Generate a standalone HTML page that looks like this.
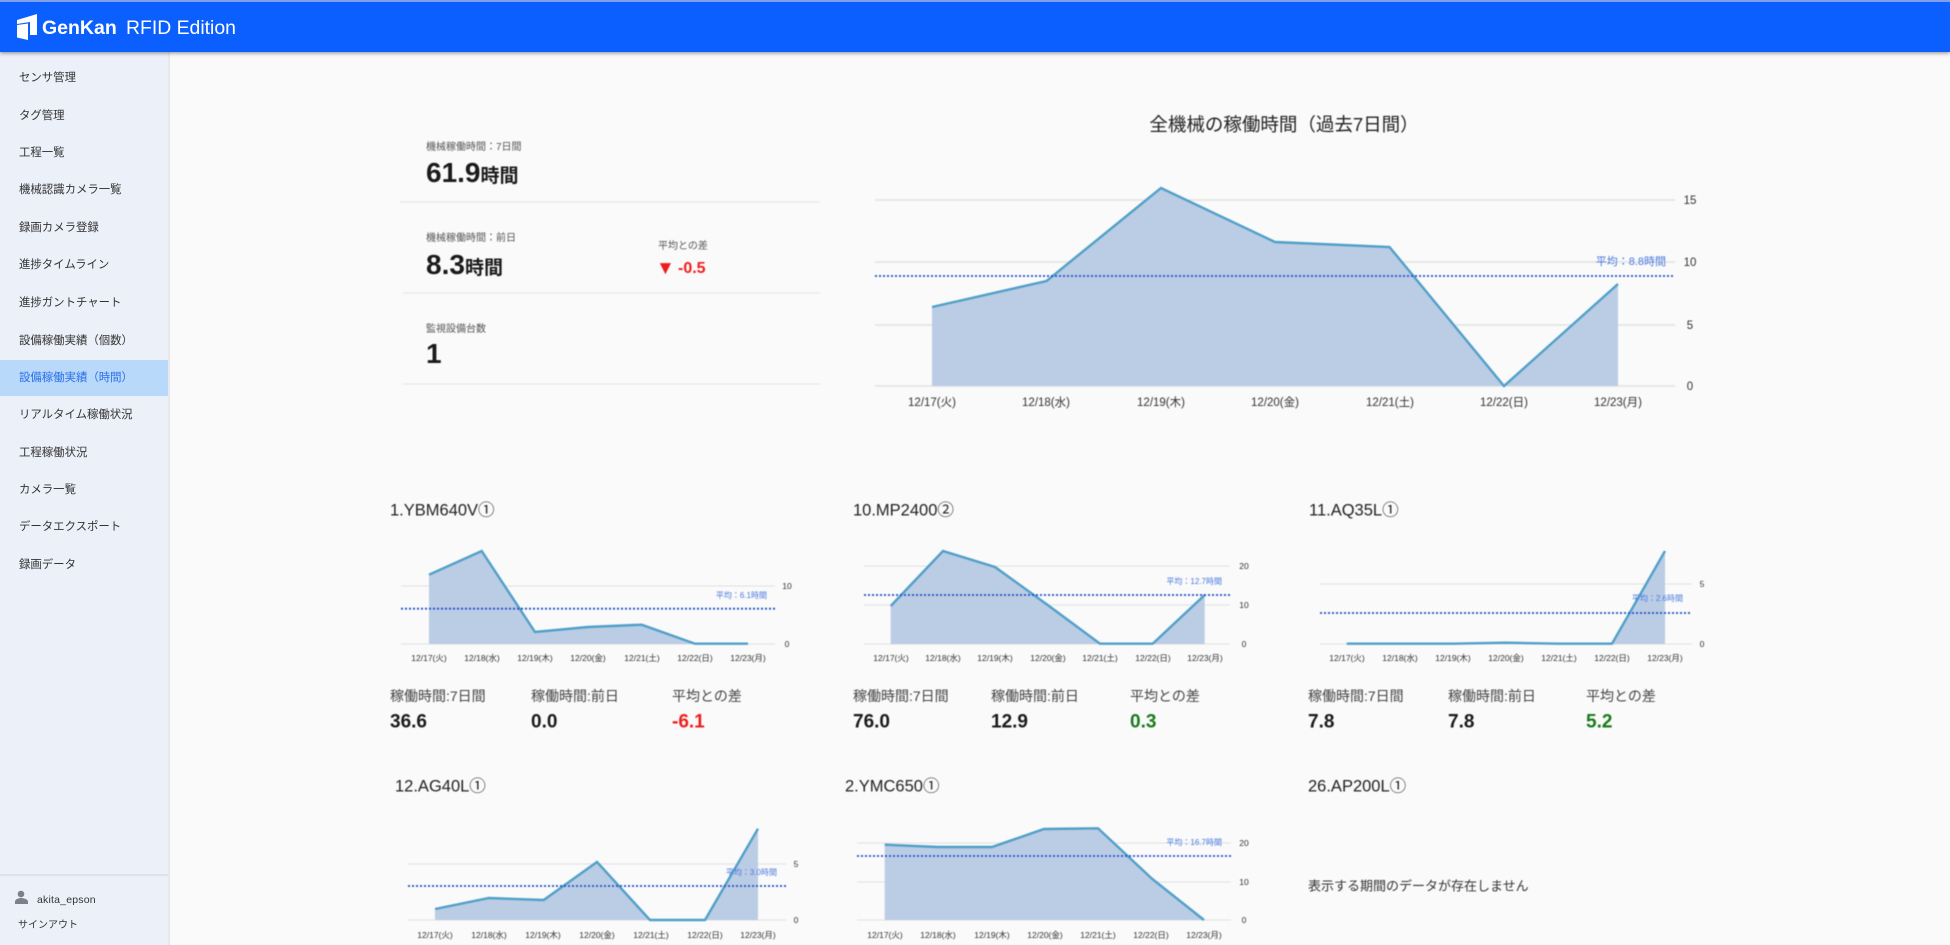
<!DOCTYPE html>
<html lang="ja">
<head>
<meta charset="utf-8">
<title>GenKan RFID Edition</title>
<style>
html,body{margin:0;padding:0;width:1950px;height:945px;overflow:hidden;background:#fafafa;font-family:"Liberation Sans","Noto Sans CJK JP",sans-serif;color:#222}
#hdr{position:absolute;left:0;top:0;width:1950px;height:52px;background:#0b5fff;border-top:2px solid #7f9fe8;box-sizing:border-box;box-shadow:0 1px 4px rgba(0,0,0,.45);z-index:3}
#side{position:absolute;left:0;top:52px;width:168px;height:893px;background:#ecf0f9;border-right:2px solid #e6e8ee}
.it{position:absolute;left:0;width:168px;height:36px;line-height:36px;padding-left:19px;box-sizing:border-box;font-size:11.4px;color:#333;white-space:nowrap}
.it span{filter:blur(.35px);display:inline-block}
.act{background:#b9d9fb;color:#2a6fe8}
svg{position:absolute;left:0;top:0}
#main{filter:blur(.4px)}
text{font-family:"Liberation Sans","Noto Sans CJK JP",sans-serif}
.gl{stroke:#e2e2e2;stroke-width:1.5;fill:none}
.ar{fill:#bbcce5;stroke:none}
.ln{fill:none;stroke:#4f9fc8;stroke-width:2.4;stroke-linejoin:miter}
.av{stroke:#1f4fc8;stroke-width:1.8;stroke-dasharray:2 2;fill:none}
.avt{fill:#4a78e0;text-anchor:end}
.x1{font-size:11.5px;fill:#333;text-anchor:middle}
.x2{font-size:8.5px;fill:#333;text-anchor:middle}
.y1{font-size:11.5px;fill:#333;text-anchor:middle}
.y2{font-size:8.5px;fill:#333;text-anchor:middle}
.t{font-size:16.5px;fill:#222}
.lb{font-size:14px;fill:#444}
.v{font-size:19px;font-weight:bold;fill:#1a1a1a}
.r{fill:#ee1c1c}.g{fill:#1a7a1a}
</style>
</head>
<body>
<div id="hdr"></div>
<div id="side">
<div class="it" style="top:8px"><span>センサ管理</span></div>
<div class="it" style="top:46px"><span>タグ管理</span></div>
<div class="it" style="top:83px"><span>工程一覧</span></div>
<div class="it" style="top:120px"><span>機械認識カメラ一覧</span></div>
<div class="it" style="top:158px"><span>録画カメラ登録</span></div>
<div class="it" style="top:195px"><span>進捗タイムライン</span></div>
<div class="it" style="top:233px"><span>進捗ガントチャート</span></div>
<div class="it" style="top:271px"><span>設備稼働実績（個数）</span></div>
<div class="it act" style="top:308px"><span>設備稼働実績（時間）</span></div>
<div class="it" style="top:345px"><span>リアルタイム稼働状況</span></div>
<div class="it" style="top:383px"><span>工程稼働状況</span></div>
<div class="it" style="top:420px"><span>カメラ一覧</span></div>
<div class="it" style="top:457px"><span>データエクスポート</span></div>
<div class="it" style="top:495px"><span>録画データ</span></div>
<div style="position:absolute;left:0;top:822px;width:168px;height:1.5px;background:#dde1ec"></div>
<div style="position:absolute;left:37px;top:840px;font-size:10.5px;line-height:16px;color:#333;letter-spacing:.2px;filter:blur(.35px)">akita_epson</div>
<div style="position:absolute;left:18px;top:866px;font-size:10px;line-height:16px;color:#333;filter:blur(.35px)">サインアウト</div>
</div>
<svg width="1950" height="945" viewBox="0 0 1950 945" style="z-index:4">
<path fill="#fff" d="M17 20 L37 14 L37 35 L30 35 L30 22 L17 24 Z"/>
<path fill="#fff" d="M17 25 L28 23.5 L28 40 L17 37.5 Z"/>
<text x="42" y="34" font-size="19.5" font-weight="bold" fill="#fff">GenKan</text>
<text x="126" y="34" font-size="19.4" fill="#fff">RFID Edition</text>
<circle cx="21" cy="894" r="3.3" fill="#7d8088"/>
<path fill="#7d8088" d="M15 904 v-2.5 c0-2.2 4-3.5 6-3.5 s7 1.300 7 3.500 v2.500 z"/>
</svg>
<svg id="main" width="1950" height="945" viewBox="0 0 1950 945">
<!-- stats -->
<text x="426" y="150" font-size="10" fill="#555">機械稼働時間：7日間</text>
<text x="426" y="182" font-size="28" font-weight="bold" fill="#1a1a1a">61.9<tspan font-size="19">時間</tspan></text>
<line x1="400" y1="202" x2="820" y2="202" stroke="#eaeaea" stroke-width="1.5"/>
<text x="426" y="241" font-size="10" fill="#555">機械稼働時間：前日</text>
<text x="426" y="274" font-size="28" font-weight="bold" fill="#1a1a1a">8.3<tspan font-size="19">時間</tspan></text>
<text x="658" y="249" font-size="10" fill="#555">平均との差</text>
<text x="656" y="274" font-size="19" font-weight="bold" fill="#ee1c1c">▼</text>
<text x="678" y="273" font-size="16" font-weight="bold" fill="#ee1c1c">-0.5</text>
<line x1="403" y1="293" x2="820" y2="293" stroke="#eaeaea" stroke-width="1.5"/>
<text x="426" y="332" font-size="10" fill="#555">監視設備台数</text>
<text x="426" y="363" font-size="28" font-weight="bold" fill="#1a1a1a">1</text>
<line x1="403" y1="384" x2="820" y2="384" stroke="#eaeaea" stroke-width="1.5"/>

<!-- main chart -->
<text x="1284" y="131" font-size="18.5" fill="#222" text-anchor="middle">全機械の稼働時間（過去7日間）</text>
<path class="gl" d="M875 200H1675M875 262H1675M875 325H1675M875 386H1675"/>
<polygon class="ar" points="932,386 932,307 1046.5,281 1161,188 1275,242 1389.5,247 1504,386 1618,284 1618,386"/>
<polyline class="ln" points="932,307 1046.5,281 1161,188 1275,242 1389.5,247 1504,386 1618,284"/>
<line class="av" x1="875" y1="276" x2="1675" y2="276"/>
<text class="avt" x="1666" y="265" font-size="11">平均：8.8時間</text>
<text class="y1" x="1690" y="204">15</text><text class="y1" x="1690" y="266">10</text><text class="y1" x="1690" y="329">5</text><text class="y1" x="1690" y="390">0</text>
<text class="x1" x="932" y="406">12/17(火)</text><text class="x1" x="1046" y="406">12/18(水)</text><text class="x1" x="1161" y="406">12/19(木)</text><text class="x1" x="1275" y="406">12/20(金)</text><text class="x1" x="1390" y="406">12/21(土)</text><text class="x1" x="1504" y="406">12/22(日)</text><text class="x1" x="1618" y="406">12/23(月)</text>

<!-- chart 1 -->
<text class="t" x="390" y="515.500">1.YBM640V①</text>
<path class="gl" style="stroke-width:1" d="M401 586H775M401 644H775"/>
<polygon class="ar" points="429,644 429,574.700 481.700,551 535,632 588,627 641.700,624.700 695,643.700 748,643.700 748,644"/>
<polyline class="ln" points="429,574.700 481.700,551 535,632 588,627 641.700,624.700 695,643.700 748,643.700"/>
<line class="av" x1="401" y1="608.700" x2="775" y2="608.700"/>
<text class="avt" x="767" y="598" font-size="8">平均：6.1時間</text>
<text class="y2" x="787" y="589">10</text><text class="y2" x="787" y="647">0</text>
<text class="x2" x="429" y="661">12/17(火)</text><text class="x2" x="482" y="661">12/18(水)</text><text class="x2" x="535" y="661">12/19(木)</text><text class="x2" x="588" y="661">12/20(金)</text><text class="x2" x="642" y="661">12/21(土)</text><text class="x2" x="695" y="661">12/22(日)</text><text class="x2" x="748" y="661">12/23(月)</text>
<text class="lb" x="390" y="701">稼働時間:7日間</text><text class="lb" x="531" y="701">稼働時間:前日</text><text class="lb" x="672" y="701">平均との差</text>
<text class="v" x="390" y="727.500">36.6</text><text class="v" x="531" y="727.500">0.0</text><text class="v r" x="672" y="727.500">-6.1</text>

<!-- chart 2 -->
<text class="t" x="853" y="515.500">10.MP2400②</text>
<path class="gl" style="stroke-width:1" d="M864 566H1230M864 605H1230M864 644H1230"/>
<polygon class="ar" points="890.700,644 890.700,606 943,551 995,567 1047.700,605 1100,643.700 1152.700,643.700 1204.700,595 1204.700,644"/>
<polyline class="ln" points="890.700,606 943,551 995,567 1047.700,605 1100,643.700 1152.700,643.700 1204.700,595"/>
<line class="av" x1="864" y1="595" x2="1230" y2="595"/>
<text class="avt" x="1222" y="584" font-size="8">平均：12.7時間</text>
<text class="y2" x="1244" y="569">20</text><text class="y2" x="1244" y="608">10</text><text class="y2" x="1244" y="647">0</text>
<text class="x2" x="891" y="661">12/17(火)</text><text class="x2" x="943" y="661">12/18(水)</text><text class="x2" x="995" y="661">12/19(木)</text><text class="x2" x="1048" y="661">12/20(金)</text><text class="x2" x="1100" y="661">12/21(土)</text><text class="x2" x="1153" y="661">12/22(日)</text><text class="x2" x="1205" y="661">12/23(月)</text>
<text class="lb" x="853" y="701">稼働時間:7日間</text><text class="lb" x="991" y="701">稼働時間:前日</text><text class="lb" x="1130" y="701">平均との差</text>
<text class="v" x="853" y="727.500">76.0</text><text class="v" x="991" y="727.500">12.9</text><text class="v g" x="1130" y="727.500">0.3</text>

<!-- chart 3 -->
<text class="t" x="1309" y="515.500">11.AQ35L①</text>
<path class="gl" style="stroke-width:1" d="M1320 584H1692M1320 644H1692"/>
<polygon class="ar" points="1612,644 1665,551 1665,644"/>
<polyline class="ln" points="1346.700,643.700 1399.700,643.700 1452.700,643.700 1505.700,642.700 1558.700,643.700 1612,643.700 1665,551"/>
<line class="av" x1="1320" y1="613" x2="1692" y2="613"/>
<text class="avt" x="1683" y="601" font-size="8">平均：2.6時間</text>
<text class="y2" x="1702" y="587">5</text><text class="y2" x="1702" y="647">0</text>
<text class="x2" x="1347" y="661">12/17(火)</text><text class="x2" x="1400" y="661">12/18(水)</text><text class="x2" x="1453" y="661">12/19(木)</text><text class="x2" x="1506" y="661">12/20(金)</text><text class="x2" x="1559" y="661">12/21(土)</text><text class="x2" x="1612" y="661">12/22(日)</text><text class="x2" x="1665" y="661">12/23(月)</text>
<text class="lb" x="1308" y="701">稼働時間:7日間</text><text class="lb" x="1448" y="701">稼働時間:前日</text><text class="lb" x="1586" y="701">平均との差</text>
<text class="v" x="1308" y="727.500">7.8</text><text class="v" x="1448" y="727.500">7.8</text><text class="v g" x="1586" y="727.500">5.2</text>

<!-- chart 4 -->
<text class="t" x="395" y="791.500">12.AG40L①</text>
<path class="gl" style="stroke-width:1" d="M408 864H786M408 920H786"/>
<polygon class="ar" points="435,920 435,909 489,898 543.700,900 597,862 650,920 705,920 758,828.700 758,920"/>
<polyline class="ln" points="435,909 489,898 543.700,900 597,862 650,920 705,920 758,828.700"/>
<line class="av" x1="408" y1="886" x2="786" y2="886"/>
<text class="avt" x="777" y="875" font-size="8">平均：3.0時間</text>
<text class="y2" x="796" y="867">5</text><text class="y2" x="796" y="923">0</text>
<text class="x2" x="435" y="938">12/17(火)</text><text class="x2" x="489" y="938">12/18(水)</text><text class="x2" x="543" y="938">12/19(木)</text><text class="x2" x="597" y="938">12/20(金)</text><text class="x2" x="651" y="938">12/21(土)</text><text class="x2" x="705" y="938">12/22(日)</text><text class="x2" x="758" y="938">12/23(月)</text>

<!-- chart 5 -->
<text class="t" x="845" y="791.500">2.YMC650①</text>
<path class="gl" style="stroke-width:1" d="M857 843H1231M857 882H1231M857 920H1231"/>
<polygon class="ar" points="884.700,920 884.700,844.700 938,847 992,847 1044,829 1098,828.300 1152,878.700 1204,920"/>
<polyline class="ln" points="884.700,844.700 938,847 992,847 1044,829 1098,828.300 1152,878.700 1204,920"/>
<line class="av" x1="857" y1="856" x2="1231" y2="856"/>
<text class="avt" x="1222" y="845" font-size="8">平均：16.7時間</text>
<text class="y2" x="1244" y="846">20</text><text class="y2" x="1244" y="885">10</text><text class="y2" x="1244" y="923">0</text>
<text class="x2" x="885" y="938">12/17(火)</text><text class="x2" x="938" y="938">12/18(水)</text><text class="x2" x="992" y="938">12/19(木)</text><text class="x2" x="1045" y="938">12/20(金)</text><text class="x2" x="1098" y="938">12/21(土)</text><text class="x2" x="1151" y="938">12/22(日)</text><text class="x2" x="1204" y="938">12/23(月)</text>

<!-- chart 6 -->
<text class="t" x="1308" y="791.500">26.AP200L①</text>
<text x="1308" y="890.500" font-size="13" fill="#333">表示する期間のデータが存在しません</text>
</svg>
</body>
</html>
